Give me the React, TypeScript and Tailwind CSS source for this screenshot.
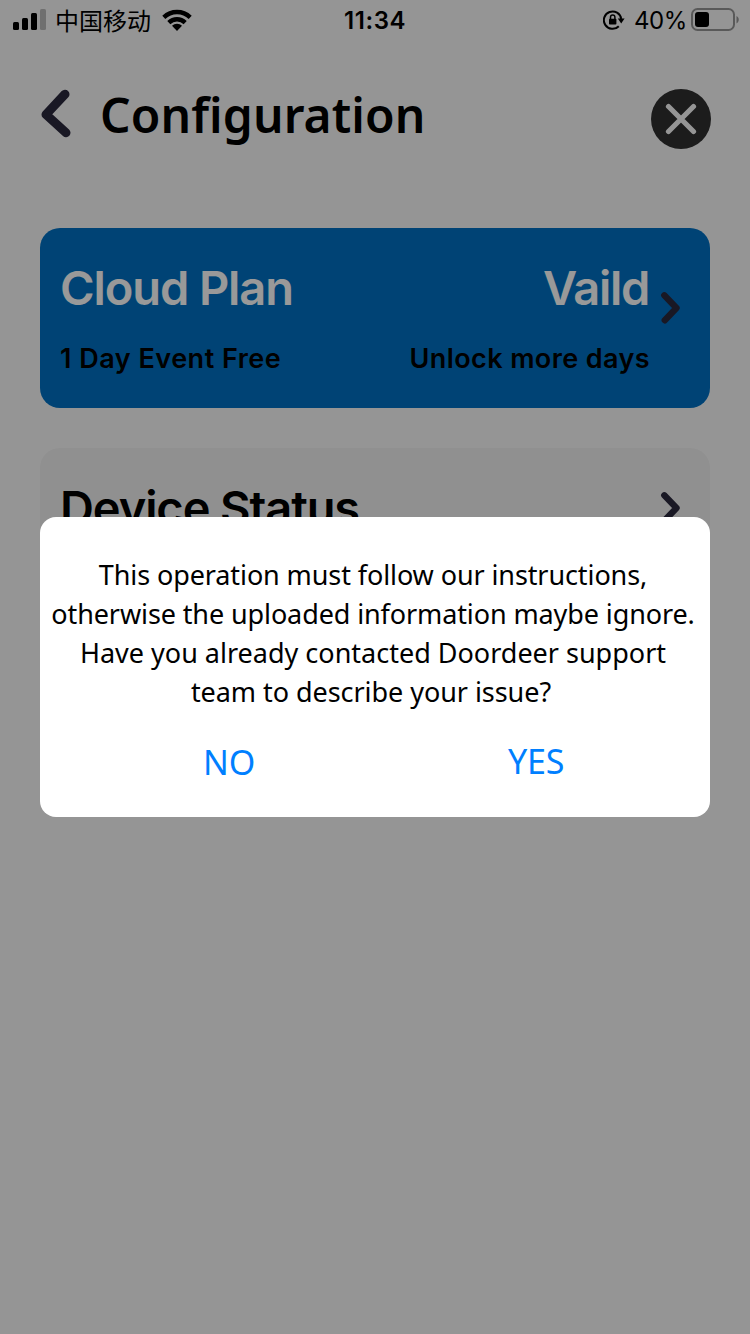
import type { ReactNode } from "react";

// iOS status bar glyphs, drawn on the same 40px strip as the clock.
function SignalIcon() {
  return (
    <svg width="34" height="24" viewBox="0 0 34 24" className="shrink-0">
      <rect x="0" y="14" width="6" height="8" rx="1.5" />
      <rect x="9" y="10" width="6" height="12" rx="1.5" />
      <rect x="18" y="5" width="6" height="17" rx="1.5" />
      <rect x="27" y="1" width="6" height="21" rx="1.5" fillOpacity="0.25" />
    </svg>
  );
}

function WifiIcon() {
  return (
    <svg width="30" height="22" viewBox="0 0 30 22" className="shrink-0">
      <g fill="none" stroke="#000" strokeWidth="4.4">
        <path d="M1.8 8.4a19 19 0 0 1 26.4 0" />
        <path d="M6.8 13.6a11.8 11.8 0 0 1 16.4 0" />
      </g>
      <path d="M15 22l-5-5.2a7.2 7.2 0 0 1 10 0z" />
    </svg>
  );
}

function RotationLockIcon() {
  return (
    <svg width="22" height="20" viewBox="0 0 22 20" className="shrink-0">
      <path
        d="M15.8 16.2A8.7 8.7 0 1 1 18.2 9"
        fill="none"
        stroke="#000"
        strokeWidth="2"
      />
      <path d="M14.8 8.6h6.8L18.2 13.6z" />
      <rect x="6" y="8.8" width="7.4" height="5.8" rx="0.8" />
      <path d="M7.5 9V7.2a2.2 2.2 0 0 1 4.4 0V9" fill="none" stroke="#000" strokeWidth="1.5" />
    </svg>
  );
}

function BatteryIcon() {
  return (
    <svg width="49" height="24" viewBox="0 0 49 24" className="shrink-0">
      <rect
        x="1"
        y="1"
        width="42"
        height="21"
        rx="5.5"
        fill="none"
        stroke="#000"
        strokeOpacity="0.4"
        strokeWidth="2"
      />
      <rect x="4" y="4" width="14" height="15" rx="3" />
      <path d="M45.5 8c3 1.4 3 6 0 7.4z" fillOpacity="0.4" />
    </svg>
  );
}

function ChevronRight() {
  return (
    <svg width="22" height="34" viewBox="0 0 22 34" fill="none" className="shrink-0">
      <path
        d="M4.3 4.3L16.5 17L4.8 29.3"
        stroke="#2b283d"
        strokeWidth="6.4"
        strokeLinecap="round"
        strokeLinejoin="round"
      />
    </svg>
  );
}

function StatusBar() {
  return (
    <div className="flex h-10 items-center">
      <div className="flex flex-1 items-center pl-[13px]">
        <SignalIcon />
        <span className="ml-2 font-['Noto_Sans_CJK_SC',sans-serif] text-[24px] leading-10 font-normal whitespace-nowrap">
          中国移动
        </span>
        <span className="ml-[11px]">
          <WifiIcon />
        </span>
      </div>
      <span className="pt-0.5 pr-[3px] text-[24px] leading-10 font-semibold tracking-[0.6px]">11:34</span>
      <div className="flex flex-1 items-center justify-end pr-[10px]">
        <RotationLockIcon />
        <span className="mr-1 ml-[9px] pt-0.5 text-[24px] leading-10 tracking-[-0.4px]">40%</span>
        <BatteryIcon />
      </div>
    </div>
  );
}

function Header() {
  return (
    <header className="flex h-[158px] items-center justify-between pr-[39px] pl-10">
      <div className="flex items-center">
        <svg width="32" height="50" viewBox="0 0 32 50" fill="none" className="mb-2.5">
          <path
            d="M25 5.2L6 25.5L26 43.8"
            stroke="#2b283d"
            strokeWidth="9"
            strokeLinecap="round"
            strokeLinejoin="round"
          />
        </svg>
        <h1 className="ml-7 pb-2 font-['Noto_Sans',sans-serif] text-[48px] leading-[64px] font-semibold tracking-[0.1px]">
          Configuration
        </h1>
      </div>
      <button className="flex size-[60px] items-center justify-center rounded-full bg-[#2f2f2f]">
        <svg width="32" height="32" viewBox="0 0 32 32" fill="none">
          <path
            d="M3.5 3.5L28.5 28.5M28.5 3.5L3.5 28.5"
            stroke="#f9f9f9"
            strokeWidth="5.2"
            strokeLinecap="round"
          />
        </svg>
      </button>
    </header>
  );
}

function Line({ className, children }: { className: string; children: ReactNode }) {
  return <span className={`block whitespace-nowrap ${className}`}>{children}</span>;
}

function ConfirmDialog() {
  return (
    <div className="absolute inset-0 flex items-start justify-center bg-black/40 pt-[517px]">
      <div
        role="dialog"
        className="h-[300px] w-[670px] rounded-2xl bg-white pt-[38px] font-['Noto_Sans',sans-serif]"
      >
        <p className="pr-1 text-center text-[27px] leading-[39px]">
          <Line className="tracking-[-0.1px]">This operation must follow our instructions,</Line>
          <Line className="tracking-[-0.11px]">otherwise the uploaded information maybe ignore.</Line>
          <Line className="tracking-[0px]">Have you already contacted Doordeer support</Line>
          <Line className="pr-1 tracking-[-0.05px]">team to describe your issue?</Line>
        </p>
        <div className="mt-[26px] flex justify-between pr-[146px] pl-[163px] text-[34px] leading-[48px] text-[#007fff]">
          <button>NO</button>
          <button className="pb-0.5 tracking-[-0.3px]">YES</button>
        </div>
      </div>
    </div>
  );
}

export default function App() {
  return (
    <div className="relative h-[1334px] w-[750px] overflow-hidden bg-[#f9f9f9] font-['Inter',sans-serif] text-black">
      <StatusBar />
      <Header />
      <main className="mt-[30px] flex flex-col gap-10 px-10">
        <section className="flex h-[180px] items-center rounded-[20px] bg-[#0071c3] pr-7 pl-5">
          <div className="flex-1 pt-px">
            <div className="flex justify-between text-[47px] leading-[60px] font-semibold text-white">
              <span className="tracking-[-1.1px]">Cloud Plan</span>
              <span className="pr-px tracking-[-1.3px]">Vaild</span>
            </div>
            <div className="mt-[21px] flex justify-between text-[27px] leading-[40px] font-semibold">
              <span className="tracking-[0.5px]">1 Day Event Free</span>
              <span className="tracking-[0.4px]">Unlock more days</span>
            </div>
          </div>
          <span className="mb-5 ml-2.5">
            <ChevronRight />
          </span>
        </section>
        <section className="flex h-[180px] items-start justify-between rounded-[20px] bg-[#f0f0f0] pt-[30px] pr-7 pl-5">
          <h2 className="text-[47px] leading-[60px] font-semibold tracking-[-1.1px]">Device Status</h2>
          <span className="mt-[13px]">
            <ChevronRight />
          </span>
        </section>
      </main>
      <ConfirmDialog />
    </div>
  );
}
